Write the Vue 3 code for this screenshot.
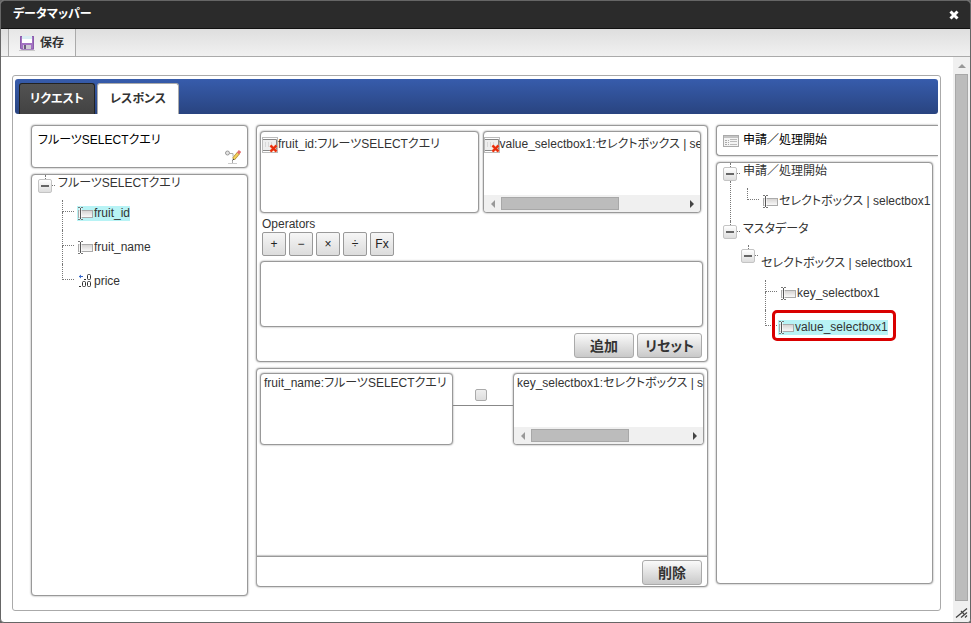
<script setup>
import { ref } from 'vue'

const activeTab = ref('response')
const tabs = [
  { id: 'request', label: 'リクエスト' },
  { id: 'response', label: 'レスポンス' },
]
const sourceFields = [
  { name: 'fruit_id', type: 'text', selected: true },
  { name: 'fruit_name', type: 'text' },
  { name: 'price', type: 'number' },
]
const masterFields = [
  { name: 'key_selectbox1', selected: false },
  { name: 'value_selectbox1', selected: true },
]
const operators = ['+', '−', '×', '÷', 'Fx']
const expression = ref('')
const mappingChecked = ref(false)
</script>

<template>
  <div class="window">
    <svg class="defs" width="0" height="0" aria-hidden="true">
      <linearGradient id="g-field" x2="0" y2="1">
        <stop offset="0" stop-color="#d4d2d1" />
        <stop offset="1" stop-color="#fbfbfb" />
      </linearGradient>
      <symbol id="i-text" viewBox="0 0 16 14">
        <rect x="1.5" y="4.5" width="14" height="7" fill="url(#g-field)" stroke="#aaa" />
        <path d="M3.5 2v11" stroke="#fff" stroke-width="3" stroke-opacity="0.6" />
        <path d="M3.5 2v11" stroke="#555" />
        <path d="M1 1.5h2M4 1.5h2M1 13.5h2M4 13.5h2" stroke="#777" />
      </symbol>
      <symbol id="i-number" viewBox="0 0 16 14">
        <path d="M2 2.5h4" stroke="#3264c8" />
        <path d="M4 0.500v4l-2-2z" fill="#3264c8" />
        <path d="M7 5.500h2M2 12.500h2" stroke="#333" stroke-width="1" />
        <rect x="10.500" y="0.500" width="3" height="5" rx="1" fill="none" stroke="#333" />
        <rect x="5.500" y="7.500" width="3" height="5" rx="1" fill="none" stroke="#333" />
        <rect x="10.500" y="7.500" width="3" height="5" rx="1" fill="none" stroke="#333" />
      </symbol>
      <symbol id="i-remove" viewBox="0 0 16 16">
        <rect x="0.500" y="0.500" width="15" height="15" fill="#fff" stroke="#bbb" />
        <path d="M1 2.500h13.500v11H1" fill="#eee" stroke="#888" />
        <path d="M3.500 5v5M6.500 5v5M9.500 5v3" stroke="#d8d8d8" />
        <path d="M8.500 8.500l6 6M14.500 8.500l-6 6" stroke="#ff9a78" stroke-width="3" />
        <path d="M8.500 8.500l6 6M14.500 8.500l-6 6" stroke="#e62a0a" stroke-width="2" />
      </symbol>
    </svg>

    <header class="titlebar">
      <h1>データマッパー</h1>
      <button class="close" type="button" aria-label="閉じる">
        <svg width="10" height="10" viewBox="0 0 10 10"><path d="M1.500 1.500l7 7M8.500 1.500l-7 7" stroke="#fff" stroke-width="3" /></svg>
      </button>
    </header>

    <div class="toolbar">
      <button class="save" type="button">
        <svg width="16" height="16" viewBox="0 0 16 16">
          <path d="M0 15.500h16" stroke="#c9c9c9" />
          <path d="M1 1h14v13.500H2l-1-1z" fill="#a371c2" />
          <path d="M1.500 1.500h13v12.500h-12l-1-1z" fill="none" stroke="#8a5cab" />
          <rect x="3" y="1" width="10" height="7" fill="#d9edf2" />
          <path d="M3 6h10" stroke="#fff" stroke-width="4" />
          <rect x="4" y="10" width="8" height="4" fill="#cfcbd4" />
          <rect x="5" y="10" width="2" height="4" fill="#6d5a80" />
        </svg>
        <span>保存</span>
      </button>
    </div>

    <div class="viewport">
      <main class="content">
        <div class="frame">
          <nav class="tabs" role="tablist">
            <button
              v-for="tab in tabs"
              :key="tab.id"
              type="button"
              role="tab"
              class="tab"
              :class="{ active: tab.id === activeTab }"
              :aria-selected="tab.id === activeTab"
              @click="activeTab = tab.id"
            >{{ tab.label }}</button>
          </nav>

          <div class="columns">
            <section class="column source">
              <div class="box source-head">
                <span>フルーツSELECTクエリ</span>
                <svg class="edit" width="16" height="16" viewBox="0 0 16 16">
                  <circle cx="2.500" cy="4" r="2" fill="#e4e4e4" stroke="#999" />
                  <path d="M5 4.500h3v3" fill="none" stroke="#aaa" />
                  <path d="M7.500 11v3" stroke="#aaa" />
                  <path d="M3 14.500h9" stroke="#ccc" />
                  <path d="M8.500 10l5-6" stroke="#a8842c" stroke-width="3.500" />
                  <path d="M8.500 10l5-6" stroke="#f4d05a" stroke-width="2" />
                  <path d="M13 4.500l2-2.500" stroke="#e26d6d" stroke-width="3" />
                  <path d="M7 11.500l1.500-2 1 1z" fill="#333" />
                </svg>
              </div>
              <div class="box tree">
                <div class="node">
                  <div class="gutter"><i class="stub"></i><button class="toggle" type="button" aria-label="折りたたむ"></button></div>
                  <i class="dots"></i>
                  <div class="node-body">
                    <div class="label">フルーツSELECTクエリ</div>
                    <ul class="leaves">
                      <li v-for="field in sourceFields" :key="field.name" class="leaf">
                        <span class="branch"><i class="down"></i><i class="rest"></i></span>
                        <a href="#" class="field" :class="{ selected: field.selected }">
                          <svg width="16" height="14"><use :href="'#i-' + field.type" /></svg>{{ field.name }}
                        </a>
                      </li>
                    </ul>
                  </div>
                </div>
              </div>
            </section>

            <section class="column mapper">
              <div class="box editor">
                <div class="pair">
                  <div class="box slot">
                    <div class="slot-text icon-text"><svg width="16" height="16"><use href="#i-remove" /></svg>fruit_id:フルーツSELECTクエリ</div>
                  </div>
                  <div class="box slot">
                    <div class="slot-text icon-text flush"><svg width="16" height="16"><use href="#i-remove" /></svg>value_selectbox1:セレクトボックス | selectbox1</div>
                    <div class="hscroll" aria-hidden="true"><i class="left"></i><span class="track"><b></b></span><i class="right"></i></div>
                  </div>
                </div>
                <div class="operators">
                  <span>Operators</span>
                  <div class="ops">
                    <button v-for="op in operators" :key="op" type="button">{{ op }}</button>
                  </div>
                </div>
                <textarea v-model="expression" class="box expression" aria-label="Operators"></textarea>
                <div class="actions">
                  <button class="btn" type="button">追加</button>
                  <button class="btn" type="button">リセット</button>
                </div>
              </div>

              <div class="box mappings">
                <div class="mapping">
                  <div class="box slot from">
                    <div class="slot-text">fruit_name:フルーツSELECTクエリ</div>
                  </div>
                  <div class="link"><input v-model="mappingChecked" type="checkbox" aria-label="fruit_name"></div>
                  <div class="box slot to">
                    <div class="slot-text">key_selectbox1:セレクトボックス | selectbox1</div>
                    <div class="hscroll" aria-hidden="true"><i class="left"></i><span class="track"><b></b></span><i class="right"></i></div>
                  </div>
                </div>
                <div class="actions footer">
                  <button class="btn" type="button">削除</button>
                </div>
              </div>
            </section>

            <section class="column target">
              <div class="box target-head">
                <svg width="16" height="14" viewBox="0 0 16 14">
                  <rect x="0.500" y="1.500" width="15" height="11" fill="#f4f4f4" stroke="#aaa" />
                  <path d="M1 3h14" stroke="#c4c4c4" stroke-width="2" />
                  <path d="M2 6.500h4M2 8.500h4M2 10.500h4" stroke="#aaa" stroke-dasharray="2 1" />
                  <path d="M7 5.500h7M7 7.500h7M7 10.500h7" stroke="#bbb" />
                </svg>
                <span>申請／処理開始</span>
              </div>
              <div class="box tree">
                <div class="node">
                  <div class="gutter"><i class="stub"></i><button class="toggle" type="button" aria-label="折りたたむ"></button><i class="line"></i></div>
                  <i class="dots"></i>
                  <div class="node-body">
                    <div class="label">申請／処理開始</div>
                    <ul class="leaves">
                      <li class="leaf">
                        <span class="branch"><i class="down"></i><i class="rest"></i></span>
                        <a href="#" class="field"><svg width="16" height="14"><use href="#i-text" /></svg>セレクトボックス | selectbox1</a>
                      </li>
                    </ul>
                  </div>
                </div>
                <div class="node">
                  <div class="gutter"><i class="stub"></i><button class="toggle" type="button" aria-label="折りたたむ"></button></div>
                  <i class="dots"></i>
                  <div class="node-body">
                    <div class="label">マスタデータ</div>
                    <div class="node child">
                      <div class="gutter"><i class="stub"></i><button class="toggle" type="button" aria-label="折りたたむ"></button></div>
                      <i class="dots"></i>
                      <div class="node-body">
                        <div class="label">セレクトボックス | selectbox1</div>
                        <ul class="leaves">
                          <li v-for="field in masterFields" :key="field.name" class="leaf">
                            <span class="branch"><i class="down"></i><i class="rest"></i></span>
                            <a href="#" class="field" :class="{ selected: field.selected, marked: field.selected }">
                              <svg width="16" height="14"><use href="#i-text" /></svg>{{ field.name }}
                            </a>
                          </li>
                        </ul>
                      </div>
                    </div>
                  </div>
                </div>
              </div>
            </section>
          </div>
        </div>
      </main>

      <div class="vscroll" aria-hidden="true">
        <i class="up"></i>
        <b></b>
        <svg width="14" height="14" viewBox="0 0 14 14">
          <path d="M1 12.500l11-9M6 12.500l6-5M10 12.500l2-2M6 6l3 3" stroke="#444" stroke-width="1.300" fill="none" />
        </svg>
      </div>
    </div>
  </div>
</template>

<style>
body {
  background: #666;
}
</style>

<style scoped>
* {
  box-sizing: border-box;
}
.window {
  display: flex;
  flex-direction: column;
  min-height: 100vh;
  border: 1px solid #666;
  border-radius: 4px;
  overflow: hidden;
  background: #fff;
  color: #333;
  font: 12px/17px "Liberation Sans", "Noto Sans CJK JP", sans-serif;
  font-feature-settings: "palt";
}
button,
textarea {
  font: inherit;
  font-feature-settings: inherit;
  color: inherit;
  margin: 0;
}
button {
  cursor: pointer;
}
.defs {
  position: absolute;
}
.titlebar {
  display: flex;
  align-items: center;
  justify-content: space-between;
  height: 28px;
  padding: 0 11px 0 12px;
  background: #2b2b2b;
  border-bottom: 1px solid #111;
  color: #fff;
}
h1 {
  margin: 0;
  font-size: 12px;
  line-height: 17px;
}
.close {
  display: flex;
  padding: 0;
  border: 0;
  background: none;
}
.toolbar {
  display: flex;
  height: 28px;
  padding-left: 7px;
  background: linear-gradient(#dedede, #f1f1f1);
  border-bottom: 1px solid #aaa;
}
.save {
  display: flex;
  align-items: center;
  gap: 5px;
  padding: 1px 11px 0 10px;
  border: solid #aaa;
  border-width: 0 1px;
  background: linear-gradient(#e6e6e6, #f6f6f6);
  font-weight: bold;
}
.viewport {
  display: flex;
  flex: 1;
}
.content {
  display: flex;
  flex: 1;
  min-width: 0;
  padding: 18px 12px 11px 11px;
}
.frame {
  display: flex;
  flex: 1;
  flex-direction: column;
  min-width: 0;
  padding: 3px 2px;
  border: 1px solid #aaa;
  border-radius: 3px;
}
.tabs {
  display: flex;
  align-items: flex-end;
  gap: 2px;
  height: 35px;
  padding-left: 4px;
  border-radius: 3px;
  background: linear-gradient(#375cac, #294480);
}
.tab {
  height: 31px;
  padding: 0 10px;
  border: 1px solid #222;
  border-bottom: 0;
  border-radius: 3px 3px 0 0;
  background: linear-gradient(#525252, #424242);
  color: #fff;
  font-weight: bold;
}
.tab.active {
  padding: 0 12px;
  border-color: #aaa;
  background: #fff;
  color: #333;
}
.columns {
  display: grid;
  flex: 1;
  grid-template-columns: 217fr 452fr 217fr;
  gap: 8px;
  padding: 11px 5px 11px 16px;
}
.column {
  display: flex;
  flex-direction: column;
  gap: 6px;
  min-width: 0;
}
.mapper {
  padding-bottom: 9px;
}
.target {
  padding-bottom: 12px;
}
.box {
  border: 1px solid #999;
  border-radius: 4px;
  background: #fff;
  box-shadow: 0 0 2px #888;
}
.source-head {
  display: flex;
  flex-direction: column;
  padding: 6px 6px 2px;
  color: #000;
}
.edit {
  align-self: flex-end;
}
.target-head {
  display: flex;
  align-items: center;
  gap: 4px;
  margin-right: -5px;
  padding: 6px;
  border-right: 0;
  border-radius: 4px 0 0 4px;
  clip-path: inset(-3px 0 -3px -3px);
  color: #000;
}
.tree {
  flex: 1;
  padding-left: 6px;
  white-space: nowrap;
}
.node {
  display: flex;
}
.node + .node {
  margin-top: 3px;
}
.gutter {
  display: flex;
  flex-direction: column;
  align-items: center;
  width: 14px;
  margin-bottom: -3px;
}
.stub {
  height: 4px;
  border-left: 1px dotted #777;
}
.line {
  flex: 1;
  border-left: 1px dotted #777;
}
.toggle {
  display: flex;
  align-items: center;
  justify-content: center;
  width: 14px;
  height: 14px;
  padding: 0;
  border: 1px solid #c4c4c4;
  border-radius: 2px;
  background: linear-gradient(#fff, #ddd);
}
.toggle::before {
  content: "";
  width: 8px;
  height: 2px;
  background: #666;
}
.dots {
  width: 3px;
  height: 11px;
  margin-right: 3px;
  border-bottom: 1px dotted #777;
}
.leaves {
  margin: 4px 0 0 4px;
  padding: 0;
  list-style: none;
}
.leaf {
  display: flex;
  align-items: center;
  gap: 3px;
  height: 34px;
}
.branch {
  display: flex;
  flex-direction: column;
  width: 12px;
  height: 34px;
}
.down {
  height: 16px;
  border-left: 1px dotted #777;
  border-bottom: 1px dotted #777;
}
.leaf:first-child .down {
  height: 12px;
  margin-top: 4px;
}
.rest {
  flex: 1;
  border-left: 1px dotted #777;
}
.leaf:last-child .rest {
  border: 0;
}
.field {
  display: flex;
  align-items: center;
  gap: 1px;
  height: 15px;
  color: inherit;
  text-decoration: none;
}
.selected {
  background: #b8f3f5;
}
.marked {
  position: relative;
  margin-left: -2px;
}
.marked::after {
  content: "";
  position: absolute;
  inset: -10px -8px -6px -6px;
  border: 3px solid #d90000;
  border-radius: 5px;
}
.child {
  margin-left: -2px;
  padding-top: 7px;
}
.child > .node-body > .label {
  margin-top: 10px;
}
.editor {
  display: flex;
  flex-direction: column;
  padding: 5px 4px 3px 3px;
}
.pair {
  display: grid;
  grid-template-columns: 1fr 1fr;
  gap: 4px;
  padding-right: 2px;
}
.slot {
  display: flex;
  flex-direction: column;
  justify-content: space-between;
  height: 82px;
  min-width: 0;
  overflow: hidden;
}
.slot-text {
  padding: 1px 0 0 3px;
  overflow-x: auto;
  scrollbar-width: none;
  white-space: nowrap;
}
.icon-text {
  display: flex;
  align-items: center;
  padding: 4px 0 0 1px;
}
.icon-text svg {
  flex: none;
}
.flush {
  padding-left: 0;
}
.hscroll {
  display: flex;
  align-items: center;
  height: 17px;
  background: #f0f0f0;
}
.hscroll i {
  width: 4px;
  margin: 0 6px 0 7px;
  border: solid transparent;
  border-width: 4px 0;
}
.hscroll .left {
  border-right: 4px solid #999;
}
.hscroll .right {
  border-left: 4px solid #444;
}
.track {
  flex: 1;
}
.track b {
  display: block;
  width: 65%;
  height: 13px;
  border: 1px solid #a8a8a8;
  background: #bcbcbc;
}
.to .track b {
  width: 63%;
}
.operators {
  padding: 3px 0 5px 2px;
}
.operators span {
  display: block;
  line-height: 16px;
}
.ops {
  display: flex;
  gap: 3px;
}
.ops button {
  width: 24px;
  height: 24px;
  padding: 0;
  border: 1px solid #999;
  border-radius: 2px;
  background: linear-gradient(#f6f6f6, #dcdcdc);
  color: #222;
}
.expression {
  width: 100%;
  height: 66px;
  padding: 3px;
  outline: 0;
  resize: none;
}
.actions {
  display: flex;
  justify-content: flex-end;
  gap: 3px;
  padding: 6px 1px 0 0;
}
.btn {
  min-width: 60px;
  height: 25px;
  padding: 0 7px;
  border: 1px solid #aaa;
  border-radius: 3px;
  background: linear-gradient(#fafafa, #c9c9c9);
  font-size: 14px;
  font-weight: bold;
  line-height: 20px;
}
.mappings {
  display: flex;
  flex: 1;
  flex-direction: column;
  justify-content: space-between;
}
.mapping {
  display: grid;
  grid-template-columns: 193fr 60fr 191fr;
  padding: 4px 3px;
}
.mapping .slot {
  height: 72px;
}
.link {
  display: flex;
  align-items: flex-end;
  justify-content: center;
  height: 33px;
  padding: 0 5px 4px 0;
  border-bottom: 1px solid #888;
}
.link input {
  width: 12px;
  height: 12px;
  margin: 0;
  appearance: none;
  border: 1px solid #aaa;
  border-radius: 2px;
  background: linear-gradient(#eee, #ddd);
}
.link input:checked {
  background: #666;
}
.footer {
  padding: 3px 5px 1px;
  border-top: 1px solid #999;
  box-shadow: 0 -1px 1px #ccc;
}
.vscroll {
  display: flex;
  flex-direction: column;
  align-items: center;
  width: 17px;
  padding-top: 7px;
  background: #f0f0f0;
}
.up {
  border: solid transparent;
  border-width: 0 4px 4px;
  border-bottom-color: #999;
}
.vscroll b {
  flex: 1;
  width: 13px;
  margin: 6px 0 4px;
  border: 1px solid #a8a8a8;
  background: #bcbcbc;
}
.vscroll svg {
  margin-bottom: 3px;
}
</style>
